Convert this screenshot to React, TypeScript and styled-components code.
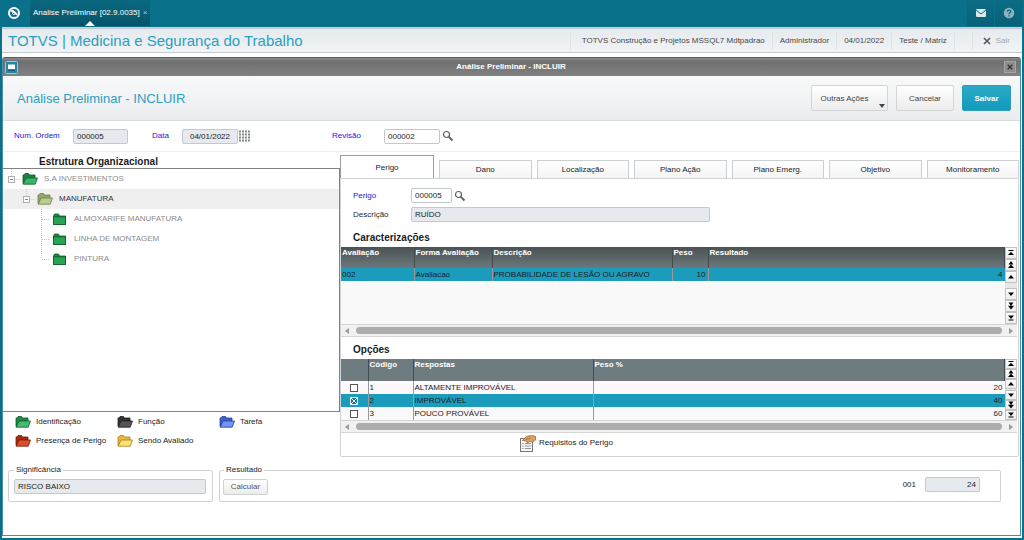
import React from "react";
import styled, { createGlobalStyle, css } from "styled-components";

const GlobalStyle = createGlobalStyle`
  * { box-sizing: border-box; }
  body {
    margin: 0;
    background: #0b718b;
    color: #1c1c1c;
    font: 8px/12px "Liberation Sans", Arial, sans-serif;
  }
  button, input { font: inherit; color: inherit; margin: 0; }
`;

/* ---------- shell ---------- */

const Shell = styled.div`
  display: flex;
  flex-direction: column;
  min-height: 100vh;
  padding: 0 2px 2px;
`;

const TopBar = styled.header`
  display: flex;
  height: 28px;
  padding-left: 4px;
  border-bottom: 1px solid #bcd8df;
`;

const Home = styled.button`
  display: flex;
  align-items: center;
  width: 24px;
  padding: 0 0 2px 1px;
  border: 0;
  background: none;
`;

const AppTab = styled.div`
  position: relative;
  display: flex;
  align-items: center;
  gap: 3px;
  height: 26px;
  padding: 0 3px;
  color: #fff;
  background: linear-gradient(#0a6980, #065468);
  &::after {
    content: "";
    position: absolute;
    bottom: 0;
    left: 50%;
    margin-left: -5px;
    border: 5px solid transparent;
    border-top: 0;
    border-bottom-color: #fff;
  }
`;

const TabClose = styled.button`
  padding: 0;
  border: 0;
  background: none;
  color: #a9cdd6;
  line-height: 12px;
`;

const TopActions = styled.div`
  display: flex;
  gap: 1px;
  margin-left: auto;
`;

const TopAction = styled.button`
  display: flex;
  align-items: center;
  justify-content: center;
  width: 27px;
  height: 26px;
  padding: 0;
  border: 0;
  background: linear-gradient(#0b6c85, #096178);
`;

const ProductBar = styled.div`
  display: flex;
  align-items: center;
  justify-content: space-between;
  height: 25px;
  padding: 0 8px 0 6px;
  border: 1px solid #c3cbd0;
  border-width: 1px 0;
  background: linear-gradient(#e6eaee, #f1f3f5);
`;

const ProductName = styled.h1`
  margin: 0;
  color: #2b9fc0;
  font-size: 15px;
  line-height: 20px;
  font-weight: 400;
`;

const SessionInfo = styled.ul`
  display: flex;
  margin: 0;
  padding: 0;
  list-style: none;
  color: #484848;
`;

const SessionItem = styled.li`
  padding: 3px 7px;
  border-left: 1px solid #dfe3e6;
  &:first-child { padding-left: 11px; }
`;

const ExitItem = styled.li`
  padding-right: 0;
  border-left: 1px solid #dfe3e6;
`;

const Exit = styled.button`
  display: flex;
  align-items: center;
  gap: 5px;
  margin-left: 17px;
  padding: 3px 4px 3px 10px;
  border: 0;
  border-left: 1px solid #dfe3e6;
  background: none;
  color: #a3a9ae;
`;

/* ---------- window ---------- */

const Window = styled.main`
  display: flex;
  flex: 1;
  flex-direction: column;
  padding-top: 4px;
  background: #fff;
  border-bottom: 2px solid #fff;
  border-right: 1px solid #fff;
`;

const Frame = styled.div`
  display: flex;
  flex: 1;
  flex-direction: column;
  border: 1px solid #4f8ba1;
  border-top-color: #55605f;
  border-radius: 3px 3px 0 0;
`;

const TitleBar = styled.div`
  display: flex;
  align-items: center;
  height: 18px;
  padding: 0 4px 0 2px;
  background: linear-gradient(#8a8a8a, #6f6f6f 20%, #828282);
  color: #fff;
`;

const TitleText = styled.h2`
  flex: 1;
  margin: 0;
  font-size: 8px;
  line-height: 12px;
  text-align: center;
`;

const TitleClose = styled.button`
  display: flex;
  align-items: center;
  justify-content: center;
  width: 12px;
  height: 12px;
  padding: 0;
  border: 1px solid #a5a5a5;
  background: #8c8c8c;
`;

const Toolbar = styled.div`
  display: flex;
  align-items: center;
  gap: 8px;
  height: 45px;
  padding: 0 9px 0 14px;
  border-bottom: 1px solid #d9dcde;
  background: linear-gradient(#f8f9f9, #ebecee);
`;

const PageTitle = styled.h2`
  flex: 1;
  margin: 0;
  padding-top: 2px;
  color: #2b9fc0;
  font-size: 13px;
  line-height: 16px;
  font-weight: 400;
`;

const ActionButton = styled.button<{ $primary?: boolean; $menu?: boolean }>`
  position: relative;
  height: 26px;
  min-width: ${(p) => (p.$menu ? 77 : p.$primary ? 49 : 58)}px;
  padding: 2px ${(p) => (p.$menu ? 18 : 8)}px 0 8px;
  border: 1px solid #d3d5d7;
  border-radius: 2px;
  background: linear-gradient(#fff, #ececec);
  color: #444;
  ${(p) =>
    p.$primary &&
    css`
      border-color: #2a9fbb;
      background: linear-gradient(#2aaac8, #149abb);
      color: #fff;
      font-weight: 700;
    `}
`;

const Caret = styled.span`
  position: absolute;
  right: 2px;
  bottom: 2px;
  border: 3px solid transparent;
  border-top: 4px solid #444;
  border-bottom: 0;
`;

/* ---------- form parts ---------- */

const KeyRow = styled.div`
  display: flex;
  align-items: center;
  height: 31px;
  padding-left: 11px;
  border-bottom: 1px solid #eceeef;
`;

const Label = styled.label<{ $width: number; $key?: boolean }>`
  width: ${(p) => p.$width}px;
  color: ${(p) => (p.$key ? "#2020e0" : "#2c2c2c")};
`;

const Field = styled.input<{ $width?: number; $gap?: number; $align?: string }>`
  width: ${(p) => (p.$width ? `${p.$width}px` : "100%")};
  height: 15px;
  margin-right: ${(p) => p.$gap ?? 0}px;
  padding: 0 3px;
  border: 1px solid #c4c8cc;
  border-radius: 2px;
  background: #fff;
  outline: 0;
  text-align: ${(p) => p.$align ?? "left"};
  &:read-only { background: #e6e9ed; }
`;

const IconButton = styled.button<{ $gap?: number }>`
  display: flex;
  margin-right: ${(p) => p.$gap ?? 0}px;
  padding: 0;
  border: 0;
  background: none;
`;

const SectionTitle = styled.h3<{ $indent: number; $top: number; $bottom: number }>`
  margin: 0;
  padding: ${(p) => `${p.$top}px 0 ${p.$bottom}px ${p.$indent}px`};
  color: #1c1c1c;
  font-size: 10px;
  line-height: 12px;
`;

/* ---------- body ---------- */

const Columns = styled.div`
  display: grid;
  grid-template-columns: 337px minmax(0, 1fr);
`;

const Side = styled.section`
  display: flex;
  flex-direction: column;
`;

const Tree = styled.ul`
  flex: 1;
  margin: 0;
  padding: 0;
  list-style: none;
  border: 1px solid #7d8285;
  border-left: 0;
`;

const TreeRow = styled.li<{ $level: number; $active?: boolean }>`
  display: flex;
  align-items: center;
  height: 20px;
  padding-left: ${(p) => p.$level * 15 + 3}px;
  background: ${(p) => (p.$active ? "#efefef" : "none")};
  color: ${(p) => (p.$active ? "#333" : "#8b8b8b")};
  svg + svg { margin-right: 6px; }
`;

const Legend = styled.ul`
  display: grid;
  grid-template-columns: repeat(3, 102px);
  grid-auto-rows: 19px;
  margin: 0;
  padding: 0 0 7px 12px;
  list-style: none;
`;

const LegendItem = styled.li`
  display: flex;
  align-items: center;
  gap: 5px;
  white-space: nowrap;
`;

const Detail = styled.section`
  padding: 3px 1px 0 0;
`;

const Tabs = styled.div`
  display: flex;
  align-items: flex-end;
  gap: 5px;
`;

const Tab = styled.button<{ $active?: boolean }>`
  flex: ${(p) => (p.$active ? "0 0 94px" : "1")};
  height: ${(p) => (p.$active ? 23 : 18)}px;
  padding: 1px 0 0;
  border: 1px solid ${(p) => (p.$active ? "#9a9fa2" : "#ccd0d2")};
  border-bottom: 0;
  background: ${(p) => (p.$active ? "#fff" : "linear-gradient(#fff, #f4f4f4)")};
`;

const TabPanel = styled.div`
  border: 1px solid #d0d3d5;
  border-radius: 0 0 2px 2px;
`;

const FieldRow = styled.div`
  display: flex;
  align-items: center;
  height: 19px;
  padding-left: 12px;
`;

const FieldRows = styled.div`
  padding: 7px 0;
`;

const GridArea = styled.div<{ $rows: string }>`
  display: grid;
  grid-template-columns: minmax(0, 1fr) 12px;
  grid-template-rows: ${(p) => p.$rows} 13px;
  margin-right: 1px;
  background: #f9f9f9;
`;

const DataTable = styled.table`
  width: 100%;
  height: min-content;
  border-collapse: collapse;
  table-layout: fixed;
`;

const Col = styled.col<{ $width?: number }>`
  width: ${(p) => (p.$width ? `${p.$width}px` : "auto")};
`;

const Th = styled.th<{ $plain?: boolean }>`
  height: ${(p) => (p.$plain ? 22 : 21)}px;
  padding: 0 1px;
  border-right: 1px solid #454c4f;
  background: ${(p) => (p.$plain ? "#6e7b7f" : "linear-gradient(#4a5254, #6c787c)")};
  color: #fff;
  text-align: left;
  vertical-align: top;
`;

const Td = styled.td<{ $end?: boolean }>`
  height: 13px;
  padding: 0 2px 0 1px;
  border-right: 1px solid #9a9a9a;
  text-align: ${(p) => (p.$end ? "right" : "left")};
  white-space: nowrap;
  &:last-child { border-right: 0; }
`;

const Tr = styled.tr<{ $selected?: boolean; $tint?: string }>`
  background: ${(p) => (p.$selected ? "#1c9cbd" : p.$tint ?? "#fff")};
`;

const TickCell = styled(Td)`
  text-align: center;
`;

const Tick = styled.input`
  appearance: none;
  display: block;
  width: 8px;
  height: 8px;
  margin: 0 auto;
  border: 1px solid #555;
  background: #fff;
  &:checked {
    border-color: #e8f4f7;
    background:
      linear-gradient(45deg, transparent 42%, #fff 42% 58%, transparent 58%),
      linear-gradient(-45deg, #1c6f88 42%, #fff 42% 58%, #1c6f88 58%);
  }
`;

const NavColumn = styled.div`
  display: flex;
  flex-direction: column;
  justify-content: space-between;
  background: #e6e6e6;
`;

const NavGroup = styled.div`
  display: flex;
  flex-direction: column;
`;

const NavButton = styled.button<{ $tall?: boolean }>`
  display: flex;
  align-items: center;
  justify-content: center;
  height: ${(p) => (p.$tall ? 12 : 10)}px;
  padding: 0;
  border: 1px solid #c2c2c2;
  background: linear-gradient(#fff, #ececec);
`;

const ScrollRow = styled.div`
  grid-column: 1 / -1;
  display: flex;
  align-items: center;
  justify-content: space-between;
  gap: 6px;
  padding: 0 4px;
  border: 1px solid #d5d5d5;
  border-width: 1px 0;
  background: #f1f1f1;
`;

const ScrollThumb = styled.div`
  flex: 1;
  height: 7px;
  border-radius: 4px;
  background: #adadad;
`;

const LinkRow = styled.div`
  display: flex;
  justify-content: center;
  height: 23px;
  padding: 0 226px 3px 0;
`;

const LinkButton = styled.button`
  display: flex;
  align-items: center;
  gap: 3px;
  padding: 0;
  border: 0;
  background: none;
`;

/* ---------- footer ---------- */

const Footer = styled.div`
  display: grid;
  grid-template-columns: 205px minmax(0, 1fr);
  gap: 6px;
  padding: 7px 19px 0 5px;
`;

const Group = styled.fieldset<{ $inset: number }>`
  display: flex;
  align-items: center;
  height: 38px;
  min-width: 0;
  margin: 0;
  padding: 0 6px 4px ${(p) => p.$inset}px;
  border: 1px solid #cfd2d4;
  border-radius: 2px;
`;

const GroupTitle = styled.legend<{ $indent?: number }>`
  margin-left: ${(p) => p.$indent ?? 0}px;
  padding: 0 2px;
`;

const SmallButton = styled.button`
  width: 45px;
  height: 16px;
  padding: 0;
  border: 1px solid #cfd1d3;
  border-radius: 2px;
  background: linear-gradient(#fff, #ececec);
  color: #555;
`;

const Total = styled.label`
  display: flex;
  align-items: center;
  gap: 9px;
  margin: 0 14px 4px auto;
`;

/* ---------- icons ---------- */

const LogoIcon = () => (
  <svg width="14" height="14" viewBox="0 0 14 14" fill="none" stroke="#fff">
    <circle cx="7" cy="7" r="5" strokeWidth="2" />
    <path d="M3.500 5c2.500-1.200 3.500 1 6.500 3.800" strokeWidth="1.800" />
    <circle cx="6.800" cy="7.200" r="1.300" strokeWidth="1" />
  </svg>
);

const MailIcon = () => (
  <svg width="12" height="10" viewBox="0 0 12 10">
    <rect x="1" y="1" width="10" height="8" rx="1" fill="#dbe9ed" />
    <path d="M1 2l5 4 5-4" fill="none" stroke="#0a667d" strokeWidth="1" />
  </svg>
);

const HelpIcon = () => (
  <svg width="12" height="12" viewBox="0 0 12 12">
    <circle cx="6" cy="6" r="5.2" fill="#8db3be" />
    <path d="M4.3 4.8c0-2.2 3.5-2.1 3.4-.1C7.700 5.900 6 5.800 6 7.300M6 8.300v1.200" fill="none" stroke="#0a6379" strokeWidth="1.3" />
  </svg>
);

const CrossIcon = ({ size = 8, color = "#555b66" }: { size?: number; color?: string }) => (
  <svg width={size} height={size} viewBox="0 0 8 8" stroke={color} strokeWidth="1.700">
    <path d="M1 1l6 6M7 1l-6 6" />
  </svg>
);

const WindowIcon = () => (
  <svg width="13" height="13" viewBox="0 0 13 13">
    <rect x=".5" y=".5" width="12" height="12" rx="1" fill="#2587a6" stroke="#9dc6d3" />
    <rect x="3" y="3.500" width="7" height="4.500" fill="#fff" />
    <path d="M3 9.500h7" stroke="#14607a" />
  </svg>
);

const CalendarIcon = () => (
  <svg width="12" height="12" viewBox="0 0 12 12" fill="#85888b">
    {[0, 1, 2, 3].map((r) =>
      [0, 1, 2, 3].map((c) => <rect key={`${r}${c}`} x={c * 3} y={r * 3 + 0.5} width="2" height="2" />)
    )}
  </svg>
);

const SearchIcon = () => (
  <svg width="12" height="12" viewBox="0 0 12 12" fill="none" stroke="#58606a">
    <circle cx="4.500" cy="4.500" r="3" strokeWidth="1.200" />
    <path d="M6.800 6.800l3.700 3.700" strokeWidth="1.900" />
  </svg>
);

const OpenFolder = ({ front, back, line }: { front: string; back: string; line: string }) => (
  <svg width="16" height="14" viewBox="0 0 16 14" stroke={line} strokeWidth=".8" strokeLinejoin="round">
    <path d="M1 11.500V3h1l1-1.500h3.500L7.500 3H13v8z" fill={back} />
    <path d="M1.200 12.200L4 6h11.500l-2.300 6.200z" fill={front} />
  </svg>
);

const ClosedFolder = () => (
  <svg width="16" height="14" viewBox="0 0 16 14" stroke="#10592b" strokeWidth=".8" strokeLinejoin="round">
    <path d="M1.500 12.500V4l1-2h4l1 2h6v8.500z" fill="#1d8a43" />
    <path d="M1.500 4.800h12v7.700h-12z" fill="#26a552" />
  </svg>
);

const Expander = () => (
  <svg width="16" height="20" viewBox="0 0 16 20" fill="none" stroke="#b0b0b0">
    <path d="M5.500 0v7M8.500 10.500h5" stroke="#c8c8c8" strokeDasharray="1 1" />
    <rect x="2.500" y="7.500" width="6" height="6" fill="#fff" />
    <path d="M4 10.500h3" stroke="#888" />
  </svg>
);

const Branch = ({ last }: { last?: boolean }) => (
  <svg width="16" height="20" viewBox="0 0 16 20" fill="none" stroke="#c4c4c4" strokeDasharray="1 1">
    <path d={`M5.500 0V${last ? 10 : 20}M6 10.500h7`} />
  </svg>
);

const DocumentIcon = () => (
  <svg width="16" height="17" viewBox="0 0 16 17">
    <rect x=".5" y="3.500" width="12" height="13" fill="#f6f6f4" stroke="#777" />
    <path d="M5 8.500h6M5 11h6M5 13.500h6" stroke="#8b929b" />
    <path d="M2.500 8.500h1M2.500 11h1M2.500 13.500h1" stroke="#5a6b9b" />
    <path d="M2.500 5.500L6 2l2.500-1.200h5l2.200.8v3.200L12.500 7 9.500 6.300 7.500 8l-1-2z" fill="#e0a15f" stroke="#8b562a" strokeWidth=".7" />
    <path d="M6 4.500l4.500-1.300" stroke="#8b562a" strokeWidth=".7" />
  </svg>
);

type NavKind = "top" | "pageUp" | "up" | "down" | "pageDown" | "bottom";

const NAV_PATHS: Record<NavKind, string> = {
  top: "M1.500 1h5v1h-5zM4 2.800L7 6H1z",
  pageUp: "M4 0l2.500 3.500h-5zM4 3.500L7 7H1z",
  up: "M4 2l3 3.500H1z",
  down: "M4 6L1 2.500h6z",
  pageDown: "M1.500 .5h5L4 4zM1 3.800h6L4 7.500z",
  bottom: "M1 1.500h6L4 5zM1.500 5.500h5v1h-5z",
};

const NAV_LABELS: Record<NavKind, string> = {
  top: "Primeiro",
  pageUp: "Página anterior",
  up: "Anterior",
  down: "Próximo",
  pageDown: "Próxima página",
  bottom: "Último",
};

const ArrowIcon = ({ right }: { right?: boolean }) => (
  <svg width="5" height="6" viewBox="0 0 5 6" fill="#9a9a9a">
    <path d={right ? "M1 0l4 3-4 3z" : "M4 0v6L0 3z"} />
  </svg>
);

/* ---------- composed parts ---------- */

const GridNav = ({ tall }: { tall?: boolean }) => {
  const group = (kinds: NavKind[]) => (
    <NavGroup>
      {kinds.map((k) => (
        <NavButton key={k} $tall={tall} aria-label={NAV_LABELS[k]}>
          <svg width="8" height="8" viewBox="0 0 8 8">
            <path d={NAV_PATHS[k]} />
          </svg>
        </NavButton>
      ))}
    </NavGroup>
  );
  return (
    <NavColumn>
      {group(["top", "pageUp", "up"])}
      {group(["down", "pageDown", "bottom"])}
    </NavColumn>
  );
};

const HorizontalScroll = () => (
  <ScrollRow>
    <ArrowIcon />
    <ScrollThumb />
    <ArrowIcon right />
  </ScrollRow>
);

const GREEN = { front: "#35b866", back: "#1d8043", line: "#125a2c" };

const LEGEND = [
  { text: "Identificação", front: "#45bd70", back: "#1f8547", line: "#135c2e" },
  { text: "Função", front: "#565656", back: "#333", line: "#1e1e1e" },
  { text: "Tarefa", front: "#7393f5", back: "#4062cf", line: "#263f96" },
  { text: "Presença de Perigo", front: "#d9502b", back: "#a52c12", line: "#731b08" },
  { text: "Sendo Avaliado", front: "#fbe276", back: "#e9b93a", line: "#a87b1c" },
];

const TABS = ["Perigo", "Dano", "Localização", "Plano Ação", "Plano Emerg.", "Objetivo", "Monitoramento"];

const OPTIONS = [
  { code: "1", answer: "ALTAMENTE IMPROVÁVEL", weight: 20, selected: false },
  { code: "2", answer: "IMPROVÁVEL", weight: 40, selected: true },
  { code: "3", answer: "POUCO PROVÁVEL", weight: 60, selected: false },
];

const SESSION = ["TOTVS Construção e Projetos MSSQL7 Mdtpadrao", "Administrador", "04/01/2022", "Teste / Matriz"];

export default function App() {
  return (
    <Shell>
      <GlobalStyle />
      <TopBar>
        <Home aria-label="Início"><LogoIcon /></Home>
        <AppTab>
          Analise Preliminar [02.9.0035]
          <TabClose aria-label="Fechar aba">×</TabClose>
        </AppTab>
        <TopActions>
          <TopAction aria-label="Mensagens"><MailIcon /></TopAction>
          <TopAction aria-label="Ajuda"><HelpIcon /></TopAction>
        </TopActions>
      </TopBar>

      <ProductBar>
        <ProductName>TOTVS | Medicina e Segurança do Trabalho</ProductName>
        <SessionInfo>
          {SESSION.map((s) => <SessionItem key={s}>{s}</SessionItem>)}
          <ExitItem><Exit><CrossIcon />Sair</Exit></ExitItem>
        </SessionInfo>
      </ProductBar>

      <Window>
        <Frame>
          <TitleBar>
            <WindowIcon />
            <TitleText>Análise Preliminar - INCLUIR</TitleText>
            <TitleClose aria-label="Fechar"><CrossIcon size={6} color="#333" /></TitleClose>
          </TitleBar>

          <Toolbar>
            <PageTitle>Análise Preliminar - INCLUIR</PageTitle>
            <ActionButton $menu>Outras Ações<Caret /></ActionButton>
            <ActionButton>Cancelar</ActionButton>
            <ActionButton $primary>Salvar</ActionButton>
          </Toolbar>

          <KeyRow>
            <Label $width={59} $key htmlFor="ordem">Num. Ordem</Label>
            <Field id="ordem" $width={55} $gap={24} readOnly defaultValue="000005" />
            <Label $width={30} $key htmlFor="data">Data</Label>
            <Field id="data" $width={56} $gap={1} $align="center" readOnly defaultValue="04/01/2022" />
            <IconButton $gap={81} aria-label="Calendário"><CalendarIcon /></IconButton>
            <Label $width={52} $key htmlFor="revisao">Revisão</Label>
            <Field id="revisao" $width={56} $gap={2} defaultValue="000002" />
            <IconButton aria-label="Pesquisar revisão"><SearchIcon /></IconButton>
          </KeyRow>

          <Columns>
            <Side>
              <SectionTitle $indent={36} $top={4} $bottom={0}>Estrutura Organizacional</SectionTitle>
              <Tree>
                <TreeRow $level={0}><Expander /><OpenFolder {...GREEN} />S.A INVESTIMENTOS</TreeRow>
                <TreeRow $level={1} $active>
                  <Expander /><OpenFolder front="#bccb93" back="#93a868" line="#6c7d4a" />MANUFATURA
                </TreeRow>
                <TreeRow $level={2}><Branch /><ClosedFolder />ALMOXARIFE MANUFATURA</TreeRow>
                <TreeRow $level={2}><Branch /><ClosedFolder />LINHA DE MONTAGEM</TreeRow>
                <TreeRow $level={2}><Branch last /><ClosedFolder />PINTURA</TreeRow>
              </Tree>
              <Legend>
                {LEGEND.map(({ text, ...colors }) => (
                  <LegendItem key={text}><OpenFolder {...colors} />{text}</LegendItem>
                ))}
              </Legend>
            </Side>

            <Detail>
              <Tabs role="tablist">
                {TABS.map((t, i) => (
                  <Tab key={t} role="tab" aria-selected={i === 0} $active={i === 0}>{t}</Tab>
                ))}
              </Tabs>
              <TabPanel role="tabpanel">
                <FieldRows>
                  <FieldRow>
                    <Label $width={58} $key htmlFor="perigo">Perigo</Label>
                    <Field id="perigo" $width={41} $gap={2} defaultValue="000005" />
                    <IconButton aria-label="Pesquisar perigo"><SearchIcon /></IconButton>
                  </FieldRow>
                  <FieldRow>
                    <Label $width={58} htmlFor="descricao">Descrição</Label>
                    <Field id="descricao" $width={299} readOnly defaultValue="RUÍDO" />
                  </FieldRow>
                </FieldRows>

                <SectionTitle $indent={12} $top={1} $bottom={3}>Caracterizações</SectionTitle>
                <GridArea $rows="77px">
                  <DataTable>
                    <colgroup>
                      <Col $width={73} /><Col $width={78} /><Col $width={180} /><Col $width={36} /><Col />
                    </colgroup>
                    <thead>
                      <tr><Th>Avaliação</Th><Th>Forma Avaliação</Th><Th>Descrição</Th><Th>Peso</Th><Th>Resultado</Th></tr>
                    </thead>
                    <tbody>
                      <Tr $selected>
                        <Td>002</Td><Td>Avaliacao</Td><Td>PROBABILIDADE DE LESÃO OU AGRAVO</Td>
                        <Td $end>10</Td><Td $end>4</Td>
                      </Tr>
                    </tbody>
                  </DataTable>
                  <GridNav tall />
                  <HorizontalScroll />
                </GridArea>

                <SectionTitle $indent={12} $top={7} $bottom={3}>Opções</SectionTitle>
                <GridArea $rows="61px">
                  <DataTable>
                    <colgroup>
                      <Col $width={27} /><Col $width={45} /><Col $width={180} /><Col />
                    </colgroup>
                    <thead>
                      <tr><Th $plain /><Th $plain>Código</Th><Th $plain>Respostas</Th><Th $plain>Peso %</Th></tr>
                    </thead>
                    <tbody>
                      {OPTIONS.map((o) => (
                        <Tr key={o.code} $selected={o.selected} $tint={o.code === "1" ? "#fcf8fc" : "#f9f9f9"}>
                          <TickCell>
                            <Tick type="checkbox" aria-label={o.answer} defaultChecked={o.selected} />
                          </TickCell>
                          <Td>{o.code}</Td><Td>{o.answer}</Td><Td $end>{o.weight}</Td>
                        </Tr>
                      ))}
                    </tbody>
                  </DataTable>
                  <GridNav />
                  <HorizontalScroll />
                </GridArea>
                <LinkRow>
                  <LinkButton><DocumentIcon />Requisitos do Perigo</LinkButton>
                </LinkRow>
              </TabPanel>
            </Detail>
          </Columns>

          <Footer>
            <Group $inset={5}>
              <GroupTitle>Significância</GroupTitle>
              <Field aria-label="Significância" readOnly defaultValue="RISCO BAIXO" />
            </Group>
            <Group $inset={3}>
              <GroupTitle $indent={1}>Resultado</GroupTitle>
              <SmallButton>Calcular</SmallButton>
              <Total>001<Field $width={55} $align="right" readOnly defaultValue="24" /></Total>
            </Group>
          </Footer>
        </Frame>
      </Window>
    </Shell>
  );
}
